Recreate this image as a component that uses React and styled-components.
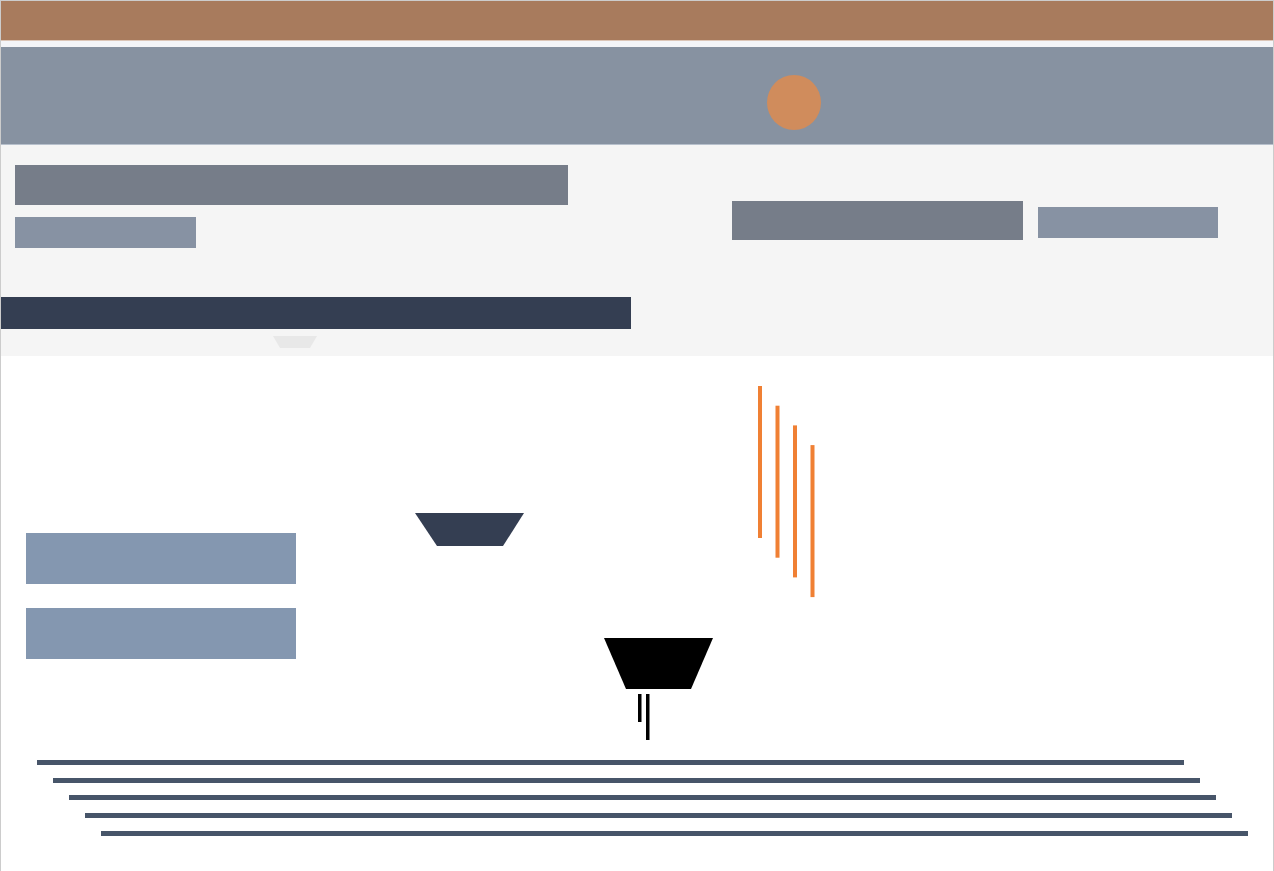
import React from "react";
import styled, { createGlobalStyle } from "styled-components";

const color = {
  brown: "#a87b5d",
  slate: "#8792a1",
  sun: "#d08c5c",
  paper: "#f5f5f5",
  steel: "#767d89",
  mist: "#8792a3",
  navy: "#343e52",
  notch: "#e8e8e8",
  button: "#8497b0",
  orange: "#f08034",
  rule: "#475569",
  border: "#cccccc",
};

const Global = createGlobalStyle`
  html, body {
    margin: 0;
    padding: 0;
    background: #ffffff;
    font-family: "Liberation Sans", Arial, sans-serif;
  }
  * {
    box-sizing: border-box;
  }
`;

const Frame = styled.div`
  width: 1274px;
  min-height: 100vh;
  border: 1px solid ${color.border};
  border-bottom: none;
  background: #ffffff;
  display: flex;
  flex-direction: column;
`;

const TopBar = styled.header`
  height: 40px;
  background: ${color.brown};
  border-bottom: 1px solid #dcc6b8;
`;

const Spacer = styled.div`
  height: 6px;
  background: #f4f5f8;
`;

const Hero = styled.section`
  height: 98px;
  background: ${color.slate};
  border-bottom: 1px solid #b7c0cc;
  padding: 28px 0 0 766px;
`;

const Sun = styled.div`
  width: 54px;
  height: 55px;
  border-radius: 50%;
  background: ${color.sun};
`;

const Intro = styled.section`
  background: ${color.paper};
  padding: 20px 0 8px 0;
  display: flex;
  flex-direction: column;
`;

const IntroRow = styled.div`
  display: flex;
  align-items: flex-start;
`;

const TitleBlock = styled.div`
  display: flex;
  flex-direction: column;
  gap: 12px;
  padding-left: 14px;
`;

const Actions = styled.div`
  display: flex;
  align-items: flex-start;
  gap: 15px;
  margin: 36px 0 0 164px;
`;

const Bar = styled.div`
  width: ${(p) => p.$w}px;
  height: ${(p) => p.$h}px;
  margin-top: ${(p) => p.$top || 0}px;
  background: ${(p) => p.$bg};
`;

const NavBar = styled.nav`
  width: 630px;
  height: 32px;
  margin-top: 49px;
  background: ${color.navy};
`;

const Notch = styled.div`
  width: 44px;
  height: 12px;
  margin: 7px 0 0 272px;
  background: ${color.notch};
  clip-path: polygon(0 0, 100% 0, 84% 100%, 16% 100%);
`;

const Stage = styled.main`
  display: flex;
  align-items: flex-start;
`;

const ButtonStack = styled.div`
  display: flex;
  flex-direction: column;
  gap: 24px;
  padding: 177px 0 0 25px;
`;

const Button = styled.button`
  width: 270px;
  height: 51px;
  border: none;
  padding: 0;
  background: ${color.button};
`;

const Drawing = styled.svg`
  display: block;
  margin: 24px 0 0 104px;
`;

const Rules = styled.div`
  display: flex;
  flex-direction: column;
  gap: 12.7px;
  margin-top: 10px;
`;

const Rule = styled.div`
  width: 1147px;
  height: 5px;
  margin-left: ${(p) => 36 + p.$step * 16}px;
  background: ${color.rule};
`;

const strokes = [0, 1, 2, 3];

function Illustration() {
  return (
    <Drawing width="430" height="370" viewBox="0 0 430 370">
      <polygon points="15,133 124,133 103,166 37,166" fill={color.navy} />
      <polygon points="204,258 313,258 291,309 226,309" fill="#000000" />
      <rect x="238" y="314" width="3.5" height="28" fill="#000000" />
      <rect x="246" y="314" width="3.5" height="46" fill="#000000" />
      {strokes.map((i) => (
        <rect
          key={i}
          x={358 + i * 17.5}
          y={6 + i * 19.7}
          width="4"
          height="152"
          fill={color.orange}
        />
      ))}
    </Drawing>
  );
}

export default function App() {
  return (
    <>
      <Global />
      <Frame>
        <TopBar />
        <Spacer />
        <Hero>
          <Sun />
        </Hero>
        <Intro>
          <IntroRow>
            <TitleBlock>
              <Bar $w={553} $h={40} $bg={color.steel} />
              <Bar $w={181} $h={31} $bg={color.mist} />
            </TitleBlock>
            <Actions>
              <Bar $w={291} $h={39} $bg={color.steel} />
              <Bar $w={180} $h={31} $top={6} $bg={color.mist} />
            </Actions>
          </IntroRow>
          <NavBar />
          <Notch />
        </Intro>
        <Stage>
          <ButtonStack>
            <Button />
            <Button />
          </ButtonStack>
          <Illustration />
        </Stage>
        <Rules>
          {[0, 1, 2, 3, 4].map((i) => (
            <Rule key={i} $step={i} />
          ))}
        </Rules>
      </Frame>
    </>
  );
}
